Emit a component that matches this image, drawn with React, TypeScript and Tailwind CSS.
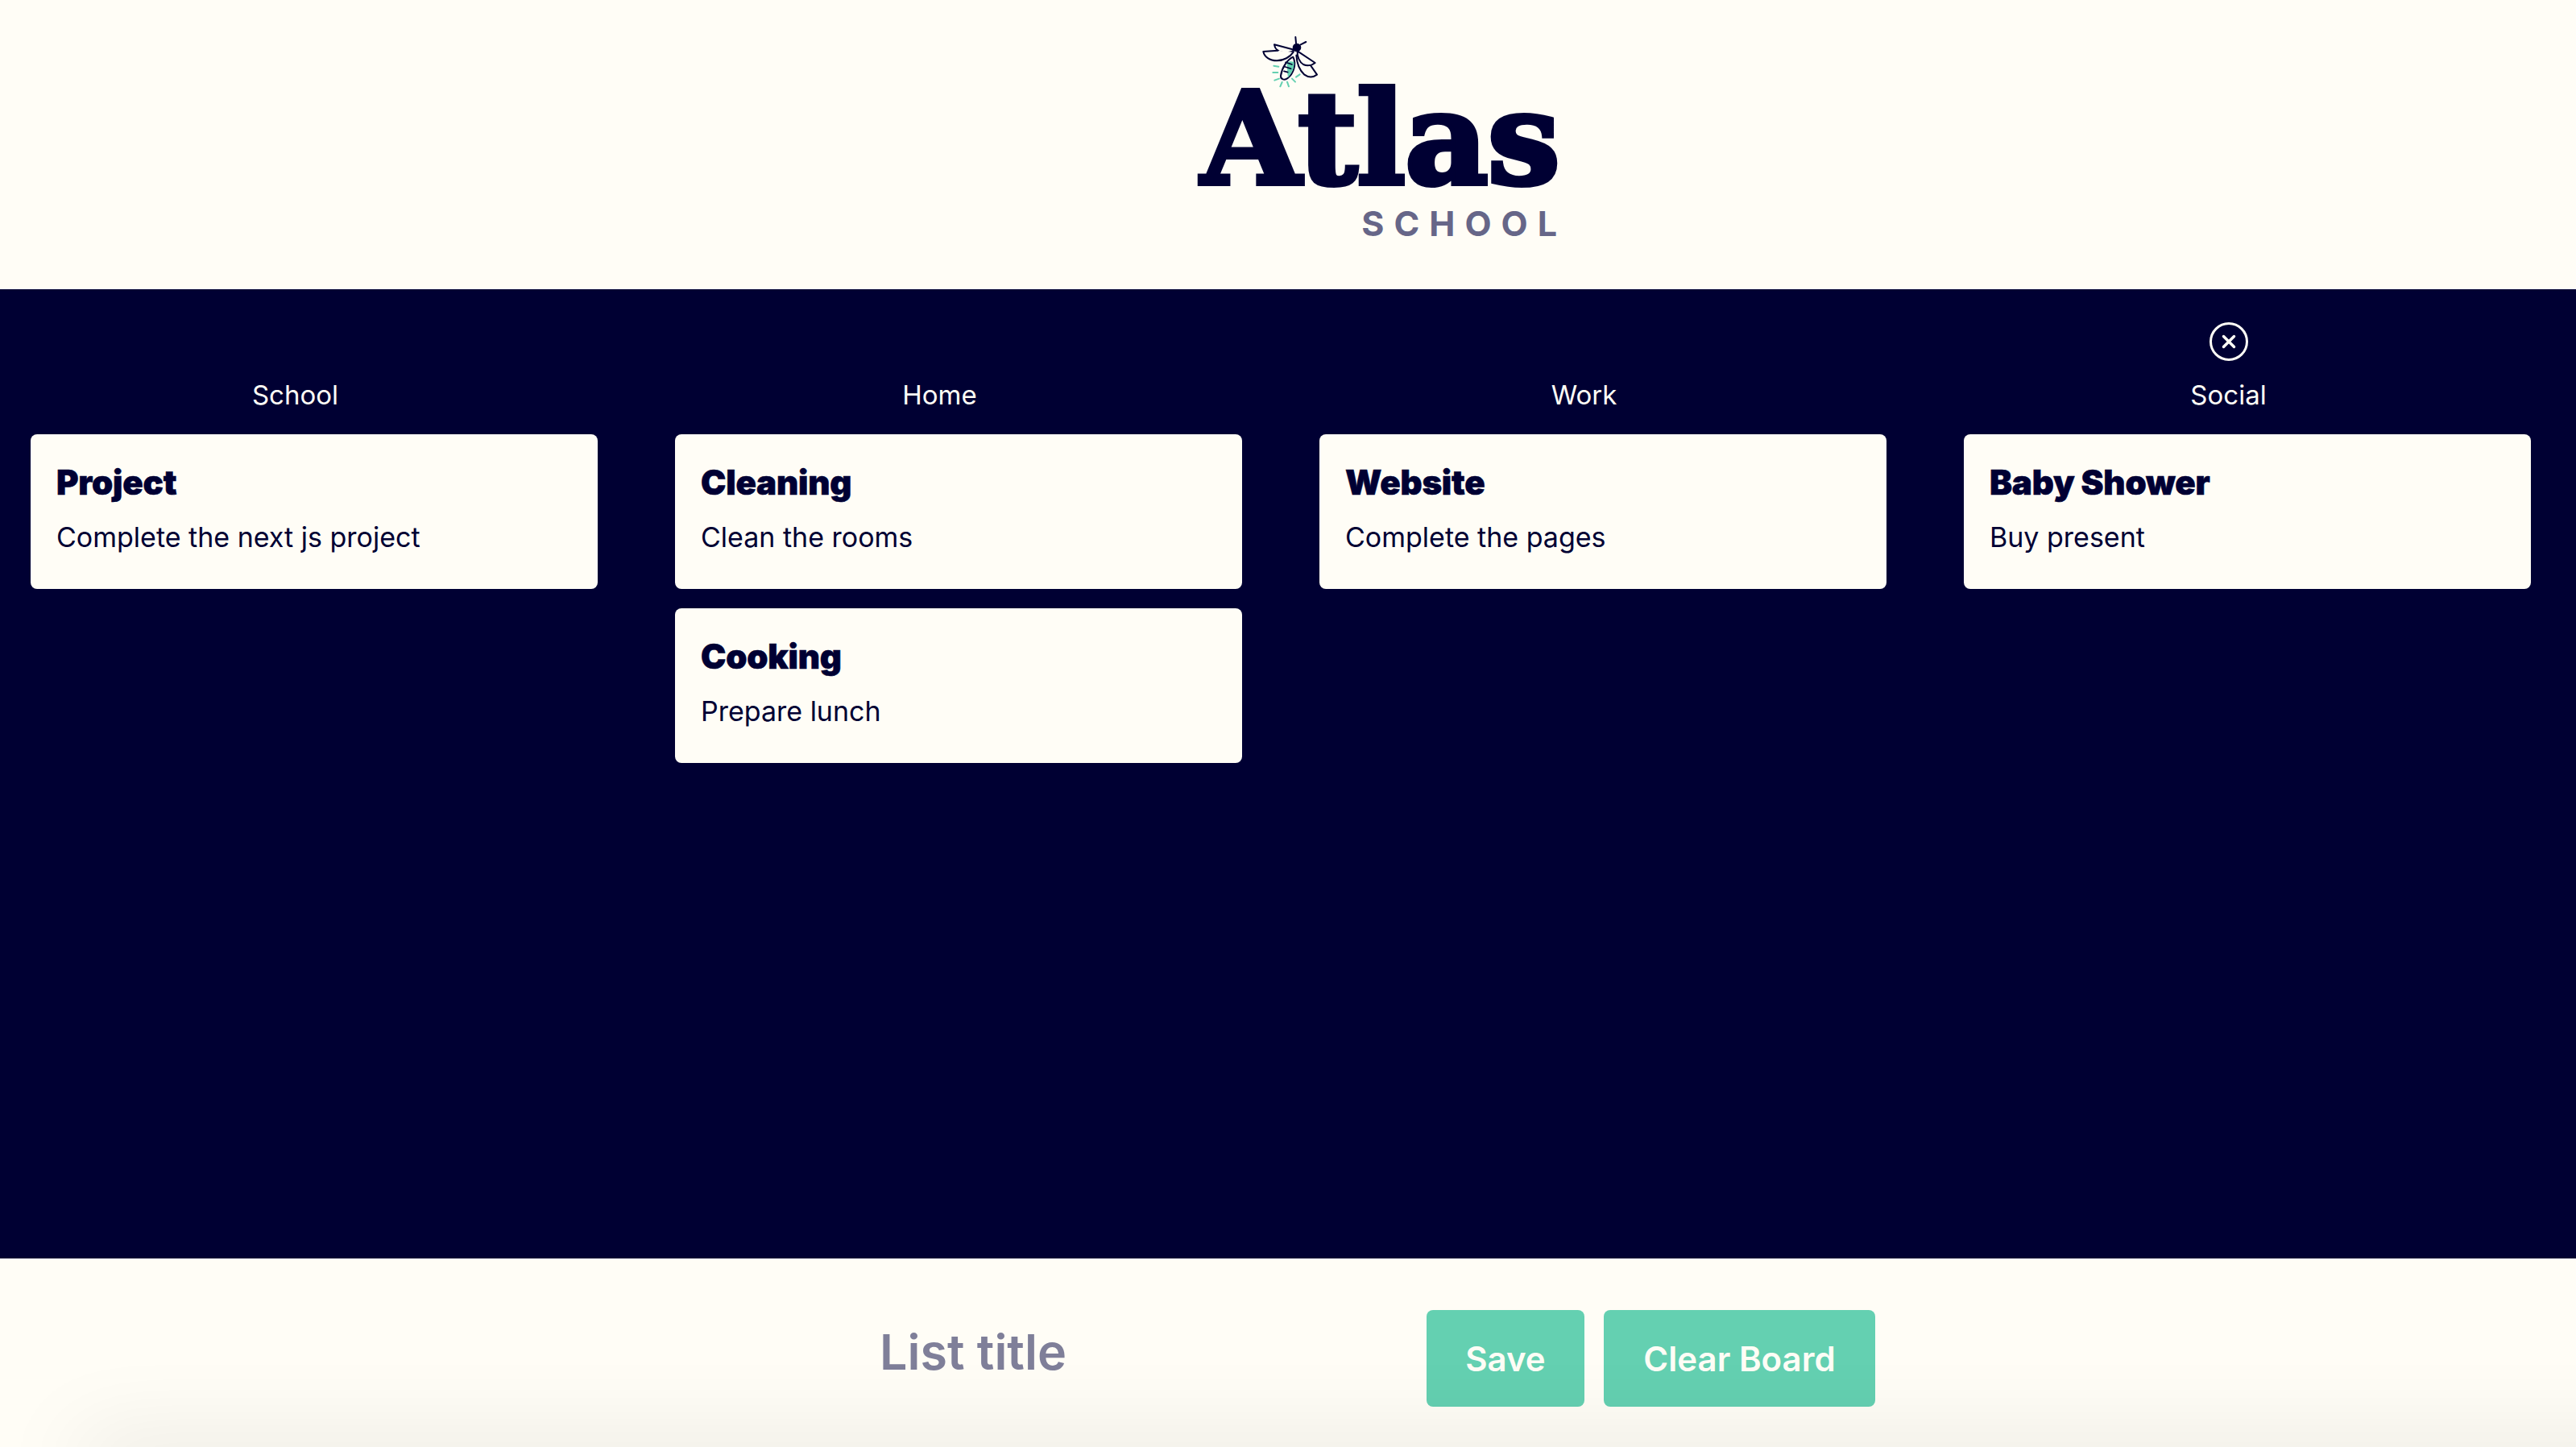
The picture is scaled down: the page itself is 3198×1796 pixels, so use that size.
const lists = [
  { title: 'School', tasks: [{ name: 'Project', text: 'Complete the next js project' }] },
  {
    title: 'Home',
    tasks: [
      { name: 'Cleaning', text: 'Clean the rooms' },
      { name: 'Cooking', text: 'Prepare lunch' },
    ],
  },
  { title: 'Work', tasks: [{ name: 'Website', text: 'Complete the pages' }] },
  { title: 'Social', removable: true, tasks: [{ name: 'Baby Shower', text: 'Buy present' }] },
]

function Firefly() {
  return (
    <svg viewBox="0 0 390 270" className="absolute left-[34px] top-[-77px] w-[130px] h-[90px]" fill="none" strokeLinecap="round" strokeLinejoin="round">
      <g stroke="#64d0b1" strokeWidth="6">
        <path d="M184 155l18 3M181 180h18M187 209l17-6M208 232l7-16M240 232l-6-17M264 215l-12-12M281 187l-14 10" />
      </g>
      <path d="M256 122c-22 10-42 40-46 70-1 14 14 18 26 9 20-15 34-50 20-79z" fill="#fffdf6" stroke="#000033" strokeWidth="6" />
      <path d="M232 143c8-4 18-6 27-2 3 18-6 40-22 58-3-18-2-38-5-56z" fill="#64d0b1" />
      <path d="M228 142l24 8M224 158l24 8M222 175l14 4" stroke="#000033" strokeWidth="5" />
      <path d="M262 96l-76-20c2 16 14 26 32 29 16 2 32 0 44-9z" fill="#fffdf6" stroke="#000033" strokeWidth="6" />
      <path d="M200 98l-55 4c4 20 24 34 50 34 26 0 50-14 62-32" fill="#fffdf6" stroke="#000033" strokeWidth="6" />
      <path d="M268 116c2 30 12 56 30 72 16 12 34 10 47 0l-36-52z" fill="#fffdf6" stroke="#000033" strokeWidth="6" />
      <path d="M272 100l66 44c-12 10-30 12-44 6-14-8-24-30-22-50z" fill="#fffdf6" stroke="#000033" strokeWidth="6" />
      <circle cx="270" cy="87" r="16" fill="#000033" />
      <path d="M267 70l-2-22M284 76l20-10" stroke="#000033" strokeWidth="6" />
    </svg>
  )
}

function Logo() {
  return (
    <div className="relative w-[447px] h-[186px]">
      <Firefly />
      <div className="absolute left-[5px] top-[-15px] text-[160px] leading-[160px] font-bold tracking-[-1px] text-[#000033] [-webkit-text-stroke:6px_#000033] font-['DejaVu_Serif',serif] whitespace-nowrap">
        Atlas
      </div>
      <div className="absolute right-0 top-[146px] text-[43px] leading-[48px] font-bold tracking-[12px] mr-[-12px] text-[#666688] font-['Inter',sans-serif]">
        SCHOOL
      </div>
    </div>
  )
}

function CloseIcon() {
  return (
    <svg viewBox="0 0 48 48" className="w-[48px] h-[48px]" fill="none" stroke="#fffdf6" strokeLinecap="round">
      <circle cx="24" cy="24" r="22.5" strokeWidth="3" />
      <path d="M17.5 17.5l13 13M30.5 17.5l-13 13" strokeWidth="3.5" />
    </svg>
  )
}

export default function App() {
  return (
    <div className="relative w-[3198px] h-[1796px] overflow-hidden flex flex-col bg-[#fffdf6] font-['Inter',sans-serif]">
      <header className="h-[359px] pt-[107px] pl-[1486px]">
        <Logo />
      </header>

      <main className="h-[1203px] bg-[#000033] flex">
        {lists.map((list) => (
          <section key={list.title} className="w-[800px] shrink-0 pt-[41px]">
            <div className="w-[733px] h-[48px] flex justify-center">{list.removable && <CloseIcon />}</div>
            <h2 className="w-[733px] mt-[18px] text-center text-[33px] leading-[48px] font-normal text-[#fffdf6]">{list.title}</h2>
            <div className="mt-[25px] ml-[38px] w-[704px] flex flex-col gap-[24px]">
              {list.tasks.map((task) => (
                <article key={task.name} className="h-[192px] rounded-[8px] bg-[#fffdf6] px-[32px] pt-[30px] text-[#000033]">
                  <h3 className="text-[42px] leading-[60px] font-black tracking-[-0.2px] [-webkit-text-stroke:0.6px_#000033]">{task.name}</h3>
                  <p className="mt-[14px] text-[34px] leading-[48px]">{task.text}</p>
                </article>
              ))}
            </div>
          </section>
        ))}
      </main>

      <footer className="flex-1 flex justify-center items-start pt-[64px]">
        <input
          placeholder="List title"
          className="w-[901px] h-[104px] pl-[222px] bg-transparent outline-none text-[61px] font-semibold text-[#000033] placeholder:text-[#7f7f99]"
        />
        <button className="w-[196px] h-[120px] rounded-[8px] bg-[#64d0b1] text-[42px] font-semibold text-[#fffdf6]">Save</button>
        <button className="w-[337px] h-[120px] ml-[24px] rounded-[8px] bg-[#64d0b1] text-[42px] font-semibold text-[#fffdf6]">Clear Board</button>
      </footer>

      <div className="absolute left-[100px] right-[-200px] top-full h-[40px] shadow-[0_0_110px_rgba(0,0,0,0.15)]" />
    </div>
  )
}
